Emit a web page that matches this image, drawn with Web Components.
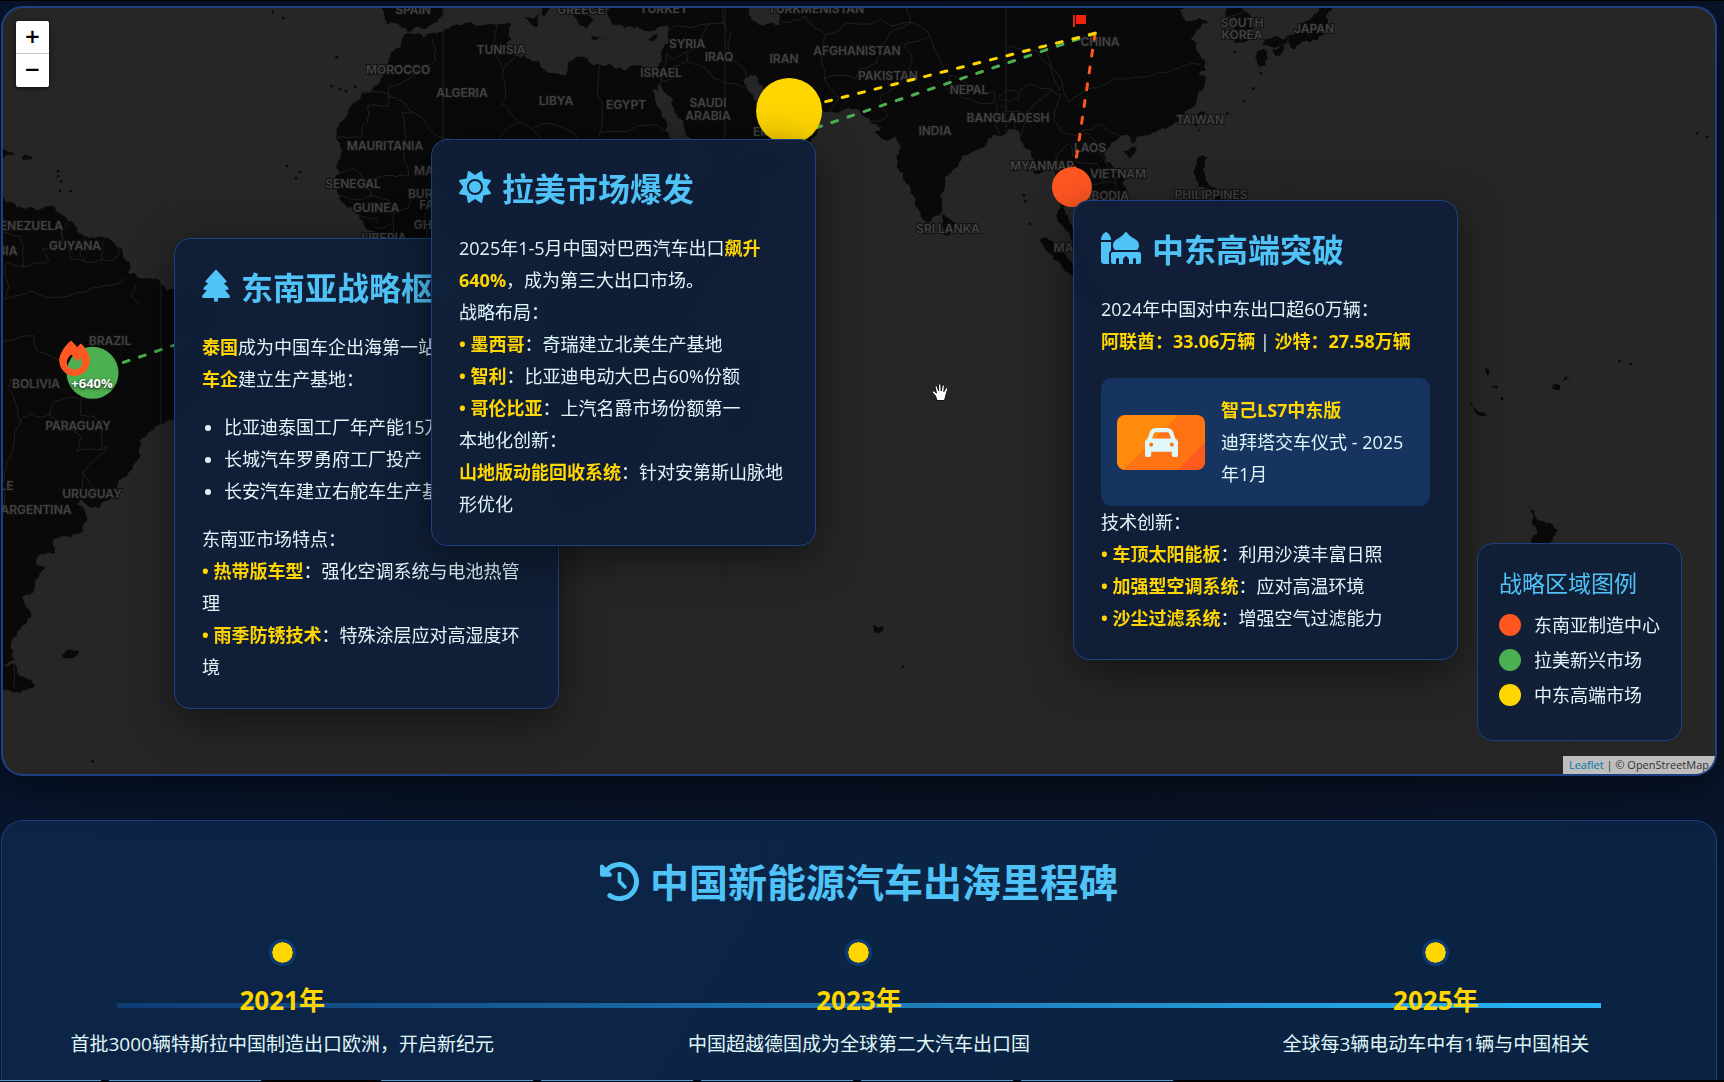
<!DOCTYPE html>
<html lang="zh-CN">
<head>
<meta charset="UTF-8">
<meta name="viewport" content="width=device-width, initial-scale=1.0">
<title>中国新能源汽车出海</title>
<style>
    :root {
        --accent: #4fc3f7;
        --gold: #ffd600;
        --orange: #ff5722;
        --green: #4caf50;
        --line: #1e4080;
        --text: #e0f7fa;
    }
    * {
        box-sizing: border-box;
    }
    body {
        margin: 0;
        min-height: 100vh;
        display: flex;
        flex-direction: column;
        border-top: 1px solid #000;
        background: linear-gradient(100deg, #07152e 0%, #081326 30%, #0a1224 70%, #08152b 100%);
        color: var(--text);
        font-family: "Open Sans", "Noto Sans CJK SC", sans-serif;
        font-size: 18px;
        line-height: 32px;
    }
    main {
        flex: 1;
        display: flex;
        flex-direction: column;
        gap: 44px;
        padding: 5px 7px 0 1px;
    }
    milestone-panel {
        flex: 1;
    }
    p {
        margin: 0;
    }
    ul {
        margin: 16px 0;
        padding-left: 22px;
    }
    strong {
        color: var(--gold);
    }
    .southeast { left: 171px; top: 230px; }
    .latin { left: 428px; top: 131px; }
    .mideast { left: 1070px; top: 192px; }
</style>
</head>
<body>
<main>
    <export-map>
        <region-card class="southeast" icon="tree" heading="东南亚战略枢纽">
            <p><strong>泰国</strong>成为中国车企出海第一站，<strong>多家中国车企</strong>建立生产基地：</p>
            <ul>
                <li>比亚迪泰国工厂年产能15万辆</li>
                <li>长城汽车罗勇府工厂投产</li>
                <li>长安汽车建立右舵车生产基地</li>
            </ul>
            <p>东南亚市场特点：</p>
            <p><strong>• 热带版车型</strong>：强化空调系统与电池热管理</p>
            <p><strong>• 雨季防锈技术</strong>：特殊涂层应对高湿度环境</p>
        </region-card>
        <region-card class="mideast" icon="mosque" heading="中东高端突破">
            <p>2024年中国对中东出口超60万辆：</p>
            <p><strong>阿联酋：33.06万辆</strong> | <strong>沙特：27.58万辆</strong></p>
            <car-spotlight>
                <strong slot="name">智己LS7中东版</strong>
                迪拜塔交车仪式 - 2025年1月
            </car-spotlight>
            <p>技术创新：</p>
            <p><strong>• 车顶太阳能板</strong>：利用沙漠丰富日照</p>
            <p><strong>• 加强型空调系统</strong>：应对高温环境</p>
            <p><strong>• 沙尘过滤系统</strong>：增强空气过滤能力</p>
        </region-card>
        <region-card class="latin" icon="sun" heading="拉美市场爆发">
            <p>2025年1-5月中国对巴西汽车出口<strong>飙升640%</strong>，成为第三大出口市场。</p>
            <p>战略布局：</p>
            <p><strong>• 墨西哥</strong>：奇瑞建立北美生产基地</p>
            <p><strong>• 智利</strong>：比亚迪电动大巴占60%份额</p>
            <p><strong>• 哥伦比亚</strong>：上汽名爵市场份额第一</p>
            <p>本地化创新：</p>
            <p><strong>山地版动能回收系统</strong>：针对安第斯山脉地形优化</p>
        </region-card>
        <map-legend slot="legend" heading="战略区域图例">
            <legend-item style="--dot: var(--orange)">东南亚制造中心</legend-item>
            <legend-item style="--dot: var(--green)">拉美新兴市场</legend-item>
            <legend-item style="--dot: var(--gold)">中东高端市场</legend-item>
        </map-legend>
    </export-map>
    <milestone-panel heading="中国新能源汽车出海里程碑">
        <milestone-item year="2021年">首批3000辆特斯拉中国制造出口欧洲，开启新纪元</milestone-item>
        <milestone-item year="2023年">中国超越德国成为全球第二大汽车出口国</milestone-item>
        <milestone-item year="2025年">全球每3辆电动车中有1辆与中国相关</milestone-item>
    </milestone-panel>
</main>
<window-strip></window-strip>

<script>
const icons = {
    tree: [448, 'M210.6 5.9L62 169.4c-3.9 4.2-6 9.8-6 15.5C56 197.7 66.3 208 79.1 208H104L30.6 281.4c-4.2 4.2-6.6 10-6.6 16C24 309.9 34.1 320 46.6 320H80L5.4 409.5C1.9 413.7 0 419 0 424.5c0 13 10.5 23.5 23.5 23.5H192v32c0 17.7 14.3 32 32 32s32-14.3 32-32V448H424.5c13 0 23.5-10.5 23.5-23.5c0-5.5-1.9-10.8-5.4-15L368 320h33.4c12.5 0 22.6-10.1 22.6-22.6c0-6-2.4-11.8-6.6-16L344 208h24.9c12.7 0 23.1-10.3 23.1-23.1c0-5.7-2.1-11.3-6-15.5L237.4 5.9C234 2.1 229.1 0 224 0s-10 2.1-13.4 5.9z'],
    sun: [512, 'M361.5 1.2c5 2.1 8.6 6.6 9.6 11.9L391 121l107.9 19.8c5.3 1 9.8 4.6 11.9 9.6s1.5 10.7-1.6 15.2L446.9 256l62.3 90.3c3.1 4.5 3.7 10.2 1.6 15.2s-6.6 8.6-11.9 9.6L391 391 371.1 498.9c-1 5.3-4.6 9.8-9.6 11.9s-10.7 1.5-15.2-1.6L256 446.9l-90.3 62.3c-4.5 3.1-10.2 3.7-15.2 1.6s-8.6-6.6-9.6-11.9L121 391 13.1 371.1c-5.3-1-9.8-4.6-11.9-9.6s-1.5-10.7 1.6-15.2L65.1 256 2.8 165.7c-3.1-4.5-3.7-10.2-1.6-15.2s6.6-8.6 11.9-9.6L121 121 140.9 13.1c1-5.3 4.6-9.8 9.6-11.9s10.7-1.5 15.2 1.6L256 65.1 346.3 2.8c4.5-3.1 10.2-3.7 15.2-1.6zM160 256a96 96 0 1 1 192 0 96 96 0 1 1 -192 0zm224 0a128 128 0 1 0 -256 0 128 128 0 1 0 256 0z'],
    mosque: [640, 'M400 0c5 0 9.8 2.4 12.8 6.4c34.7 46.3 78.1 74.9 133.5 111.5c5.2 3.4 10.5 7 16 10.6c28.9 19.2 45.7 51.7 45.7 86.1c0 28.6-11.3 54.5-29.8 73.4H221.8c-18.4-19-29.8-44.9-29.8-73.4c0-34.4 16.7-66.9 45.7-86.1c5.4-3.6 10.8-7.1 16-10.6C309.1 81.3 352.5 52.7 387.2 6.4c3-4 7.8-6.4 12.8-6.4zM288 512V440c0-13.3-10.7-24-24-24s-24 10.7-24 24v72H192c-17.7 0-32-14.3-32-32V352c0-17.7 14.3-32 32-32H608c17.7 0 32 14.3 32 32V480c0 17.7-14.3 32-32 32H560V440c0-13.3-10.7-24-24-24s-24 10.7-24 24v72H448V454c0-19-8.4-37-23-49.2L400 384l-25 20.8C360.4 417 352 435 352 454v58H288zM70.4 5.2c5.7-4.3 13.5-4.3 19.2 0l16 12C139.8 42.9 160 83.2 160 126v2H0v-2C0 83.2 20.2 42.9 54.4 17.2l16-12zM0 160H160V296.6c-19.1 11.1-32 31.7-32 55.4V480c0 9.6 2.1 18.6 5.8 26.8c-6.6 3.4-14 5.2-21.8 5.2H48c-26.5 0-48-21.5-48-48V176 160z'],
    car: [512, 'M135.2 117.4L109.1 192H402.9l-26.1-74.6C372.3 104.6 360.2 96 346.6 96H165.4c-13.6 0-25.7 8.6-30.2 21.4zM39.6 196.8L74.8 96.3C88.3 57.8 124.6 32 165.4 32H346.6c40.8 0 77.1 25.8 90.6 64.3l35.2 100.5c23.2 9.6 39.6 32.5 39.6 59.2V400v48c0 17.7-14.3 32-32 32H448c-17.7 0-32-14.3-32-32V400H96v48c0 17.7-14.3 32-32 32H32c-17.7 0-32-14.3-32-32V400 256c0-26.7 16.4-49.6 39.6-59.2zM128 288a32 32 0 1 0 -64 0 32 32 0 1 0 64 0zm288 32a32 32 0 1 0 0-64 32 32 0 1 0 0 64z'],
    history: [512, 'M75 75L41 41C25.9 25.9 0 36.6 0 57.9V168c0 13.3 10.7 24 24 24H134.1c21.4 0 32.1-25.9 17-41l-30.8-30.8C155 85.5 203 64 256 64c106 0 192 86 192 192s-86 192-192 192c-40.8 0-78.6-12.7-109.7-34.4c-14.5-10.1-34.4-6.6-44.6 7.9s-6.6 34.4 7.9 44.6C151.2 495 201.7 512 256 512c141.4 0 256-114.6 256-256S397.4 0 256 0C185.3 0 121.3 28.7 75 75zm181 53c-13.3 0-24 10.7-24 24V256c0 6.4 2.5 12.5 7 17l72 72c9.4 9.4 24.6 9.4 33.9 0s9.4-24.6 0-33.9l-65-65V152c0-13.3-10.7-24-24-24z'],
    fire: [448, 'M159.3 5.4c7.8-7.3 19.9-7.2 27.7 .1c27.6 25.9 53.5 53.8 77.7 84c11-14.4 23.5-30.1 37-42.9c7.9-7.4 20.1-7.4 28 .1c34.6 33 63.9 76.6 84.5 118c20.3 40.8 33.8 82.5 33.8 111.9C448 404.2 348.2 512 224 512C98.4 512 0 404.1 0 276.5c0-38.4 17.8-85.3 45.4-131.7C73.3 97.7 112.7 48.6 159.3 5.4zM225.7 416c25.3 0 47.7-7 68.8-21c42.1-29.4 53.4-88.2 28.1-134.4c-4.5-9-16-9.6-22.5-2l-25.2 29.3c-6.6 7.6-18.5 7.4-24.7-.5c-16.5-21-46-58.5-62.8-79.8c-6.3-8-18.3-8.1-24.7-.1c-33.8 42.5-50.8 69.3-50.8 99.4C112 375.4 162.6 416 225.7 416z'],
};

// outlines as "lon,lat lon,lat ..."
const land = [
    // south america
    '-76,11 -72,12 -71.5,12.4 -70,12.1 -70,11.5 -68.4,11.2 -68,10.6 -66,10.6 -64.7,10.1 -62,10.7 -61.8,9.8 -60.8,9.3 -60,8.5 -58.5,7.3 -57.1,6 -55,5.9 -54,5.8 -52.6,5 -51.6,4.2 -51,2.5 -50,1.7 -50.4,.2 -49,-.3 -48,-.7 -47,-.7 -45,-1.5 -44.3,-2.6 -43,-2.4 -41.5,-2.9 -40,-2.8 -38.5,-3.7 -37,-4.8 -35.4,-5.2 -34.9,-7 -35.2,-9 -36.5,-10.5 -37.5,-12 -38.5,-13 -39,-14.5 -39,-17 -39.7,-19.5 -40.9,-22 -42,-22.9 -44.5,-23.1 -46.5,-24.2 -48.5,-25.8 -48.7,-28.3 -50.2,-30.2 -52,-32.5 -53.5,-34 -54.9,-34.9 -56.5,-34.9 -58,-34 -58.4,-34.5 -57.2,-35.5 -56.8,-36.4 -57.6,-38 -59.5,-38.7 -62.2,-38.9 -62,-40.7 -64.8,-41 -65,-42 -63.6,-42.4 -64.5,-43 -65.3,-44.8 -67.3,-45.8 -66.5,-47 -65.8,-47.9 -67.5,-49.2 -69,-50.6 -68.4,-52.3 -70.5,-52.8 -71,-54 -76,-54 -80,-40 -80,-10',
    '-68.5,-52.7 -67.8,-53.8 -65.2,-54.7 -67,-55.2 -70,-55.2 -72,-54',
    '-61,-51.8 -59.6,-51.3 -58,-51.5 -59,-52.1 -60.6,-52.2',
    // africa, europe's edge and asia in one ring
    '-6,35.8 -5.3,35.9 -2.9,35.3 -1,35.8 1,36.5 3,36.9 6,36.9 8.5,37 10.2,37.2 11,37 10.5,36 10.9,35 10.1,34.2 11.2,33.2 13,32.9 15.2,32.3 15.6,31.4 18,30.5 19.7,30.4 20,31.5 20.1,32.2 21.6,32.9 23,32.6 23.2,32.2 25,31.7 27.5,31.2 29,30.9 30.5,31.5 32.3,31.2 34.2,31.3 34.5,31.6 35,32.8 35.9,34.5 35.8,36 36.1,36.8 34.5,36.7 33,36.1 31,36.8 30.5,36.5 29,36.5 27.3,37 26.3,38.3 26.7,39.3 26,40.5 26,50 50,52 75,52 100,52 120,52 138,50 134,43 130.7,42.3 129,41 127.5,39.5 128.3,38.6 129,37.7 129.5,36.5 129,35.1 127.5,34.7 126.4,34.6 126.4,36.5 126.7,37.5 125,38 125.2,39.3 124.3,39.9 123,39.7 121.2,38.8 121.5,40.5 120,40 118.5,39.1 117.7,38.9 118.2,38 119,37.3 120.8,37.8 122.5,37.3 121,36.6 119.5,35.3 120.3,34 121.8,32.1 121.8,31 120.8,30.4 122,29.9 121.6,28.5 120.5,27.2 119.5,25.5 118.2,24.4 116.7,23.3 114.3,22.4 113.3,22 111,21.5 110.3,20.4 109.8,21.5 108.3,21.6 106.8,20.5 105.7,18.9 107,17 108.8,15.4 109.3,13.2 109,11.5 107,10.4 106.5,9.5 105,8.6 104.8,10.2 103.5,10.6 102.5,12 101,12.7 100.9,13.5 100,13.4 99.9,12 99.2,10.3 99.9,9.2 100.6,7.2 102,6.3 103.3,4.8 103.4,3 104.2,1.4 103.4,1.3 101.3,2.9 100.4,5.5 100.1,6.5 98.3,8.2 98.7,10.5 98.7,12 97.8,14.8 97.6,16.5 96,16.4 95.3,15.8 94.3,16 94.5,17.5 93.8,19.5 92.3,20.8 91.8,22.4 90.5,22.6 90,21.8 88,21.7 87,21 86.8,20.2 85,19.3 82.3,16.9 81,15.8 80.2,15.3 80.1,13.5 79.8,11.5 79.8,10.3 79,9.3 78.1,8.7 77.5,8.1 76.5,9 75.5,11.8 74.5,14 73.5,16 72.8,18.8 72.8,20.5 72.4,21.3 71,20.8 69,22.1 70,22.8 68.6,23.3 67,24.5 66.5,25.3 62,25.1 59,25.4 57.3,25.8 56.9,27 54.8,26.6 52.5,27.5 51,28.8 50,30.2 48.5,30 48,29.5 48.7,28.2 50.2,26.6 50.8,25 51.2,26 51.6,25 51.5,24.3 54,24.1 56.1,26.1 56.4,24.8 58.6,23.6 59.8,22.5 58.5,20.4 57.7,19 55.3,17.4 52.2,15.7 49,14.2 45,12.8 43.5,12.7 42.8,15 42.6,16.5 40.8,19.5 39,21.5 38.5,23.5 37,25 35.2,28 34.9,29.4 34.4,28 33.3,28.3 32.6,29.8 33.5,28 34,26.5 35.5,24 35.6,22.5 37.2,21 37.4,19 38.6,18 39.6,15.5 41.2,14.6 43.1,12.5 43.2,11.6 44.5,10.5 47,11.2 51.2,11.9 50.8,9.5 49,6.5 47.5,4.2 44,1.2 42.5,-.5 41,-2 39.5,-4.5 38.8,-6.5 39.5,-8 40.5,-10.5 40.6,-15 38,-17.2 34.8,-20 35.5,-24 32.8,-26 32.5,-28.5 30,-31.5 27,-33.7 22,-34.1 20,-34.8 18.4,-34 18,-32 16.5,-28.6 15,-26 14.5,-22.5 12,-18.2 11.8,-16 13.5,-12.5 13,-9 12.2,-6 9.5,-2.5 8.8,-.7 9.5,1 9.7,3.5 8.5,4.7 6.5,4.3 5,5.7 2.5,6.3 -2,4.8 -4.5,5.2 -7.5,4.4 -9.5,5.6 -11.5,6.9 -13.2,8.7 -14.5,10.5 -16.5,12.2 -16.8,13.5 -17.5,14.7 -16.5,16 -16.3,19 -17,21 -16,23.8 -14.8,25.8 -13,27.7 -11,28.8 -9.7,30 -9.8,31.4 -8.5,33.3 -6.8,34.1',
    // mediterranean
    '-9,41 -9.5,38.7 -8.8,37 -7.4,37.2 -6.3,36.6 -5.6,36 -4.4,36.7 -2.2,36.8 -.7,37.7 .1,38.7 -.3,39.5 0,41',
    '12.5,38 15.6,38.2 15.1,36.7',
    '8.5,39 9.6,39.2 9.7,41 8.3,41',
    '15.8,38 16.6,38.4 17,39 18,40 16,41 15.8,40',
    '20,40 21.3,37.7 22,36.8 23,36.5 24,37.7 23,38.5 24,38.2 23,40',
    '23.6,35.5 26.2,35.2 24,35',
    '32.4,35 34.5,35.6 33.8,34.9',
    // indian ocean and south-east asia
    '80,9.7 81.8,7.5 81,6.2 80,6.2 79.8,8',
    '95.3,5.6 97.5,5.2 100.5,2 103.5,-.5 106,-3 105.8,-5.8 104,-5.5 101,-2.5 98.7,1.5',
    '121,25.1 121.9,25 121,22 120.1,23',
    '108.7,19.3 110.5,20.1 111,19.5 109.5,18.3',
    '120.6,18.5 122.2,18.4 121.7,16 123.8,13.3 120.7,13.8 120,16',
    '123,12 124.5,12.5 125.3,11 123,9.5',
    '49.3,-12.2 50.3,-15.8 47.2,-25 44,-24.5 44.3,-17',
    // japan
    '130,33.5 131.7,33.6 131.5,31.5 130.3,31.3 129.8,32.7',
    '131,34.2 133,35.5 136,35.7 137.3,37.2 139,38 140,40 141.5,41 142,39.5 141,38 140.8,35.8 139.8,35 138.5,34.7 137,34.6 136,33.7 135,34.6 132.5,34.1',
    '132.5,33.8 134.5,34.3 134,33.3 133,32.8',
    // new zealand
    '172.7,-34.5 174.5,-36 175.5,-36.7 178.4,-37.7 177,-39.3 175.3,-41.6 173.8,-39.3 174.8,-38',
    '172.7,-40.6 174.2,-41.6 171,-44 170.5,-46 168.5,-46.6 166.5,-45.8 171,-42',
    // caribbean and small islands
    '-76,18.4 -71,19.8 -68.4,18.6 -71,18',
    '-67.2,18.5 -65.7,18.4 -65.8,18 -67.2,18',
    '68.8,-48.8 70.4,-49 69.8,-49.7 68.9,-49.6',
    '177.3,-17.6 178.6,-17.6 178.4,-18.2 177.4,-18.1',
    '178.8,-16.8 180,-16.2 179.2,-16.8',
    '164,-20.2 166.8,-22.2 166,-22.1',
    '166.6,-14.7 167.2,-15.8 166.9,-16',
];

const lakes = [
    '47,45 49.5,41 49,39 49.2,37.6 51,36.8 53.8,36.9 54,39 53,41 54,45',
];

const specks = [
    [-61.5, 16.2], [-61, 14.6], [-61.2, 13.2], [-61.5, 15.4], [-59.5, 13.1], [-17.8, 28.7], [-16.5, 28.3], [-15.5, 28],
    [-14, 28.6], [-17, 32.7], [-25.5, 37.8], [-27.2, 38.6], [-24.9, 17], [-23.5, 15.1], [-22.9, 16.1], [92.8, 12.5],
    [93, 11.5], [93.8, 8], [128, 26.6], [129.5, 28.4], [125.3, 24.8], [130.7, 30.5], [126.5, 33.4], [73.5, -53],
    [167.8, -17.7], [168.3, -17.8], [169.2, -19.5], [200.4, 21.9], [202, 21.4], [203.8, 20.8],
    [188, -13.8], [189.8, -14.2], [-56, -61.2],
];

const borders = [
    '-1.7,35.1 -1.2,32.3 -3,31.5 -5,30 -8.7,28.7 -8.7,27.3', '-8.7,27.7 -13,27.7', '-8.7,27.3 -8.7,26 -12,26 -12,23.5 -13,23 -13,21.3 -17,21.3',
    '-8.7,27.3 -4.8,25 1.2,21.1 1.8,20.3 3.2,19.7 3.3,19 5.8,19.5 12,23.5', '-4.8,25 -6.5,25 -5.5,15.5 -9.5,15.5 -12,14.8',
    '-16.4,16 -14.5,16.6 -12.2,14.8 -11.4,12.4 -16.7,12.4', '-11.4,12.4 -8,11 -8,8 -11,7.5', '-8,8 -7.5,4.5', '-13.5,9.5 -10.5,9 -10.5,8',
    '-8,10.5 -5.5,10.4 -5.2,12 -3,13.5 0,15 1,13.5 2.2,12.4', '-2.8,9.7 -2.9,5', '0,11 .5,6',
    '12,23.5 9.4,26.2 9.9,28.5 9.5,30.2 9,32 7.5,33.8 8.3,35 8.6,36.9', '9.5,30.2 10.2,31.7 11.5,33.1',
    '12,23.5 14.2,22.6 16,23.4 24,19.5 24,20 25,20 25,22', '14.2,22.6 15.8,20 15.5,16.9', '3.3,19 3.8,15.7 1,14.9',
    '25,31.6 24.8,29.3 25,22 37,22', '34.3,31.3 34.9,29.5 35.5,31.8 35.6,33.2 36.8,32.3 38.8,33.4 41,34.4 42.4,37.1',
    '36,36 36.8,36.7 42.4,37.1 44.8,37.2 46,35.8 45.5,34 47.7,31.5 48.5,30', '44.8,37.2 44,39.5',
    '34.9,29.4 37.5,30 37,31.5 39.1,32.1 42,31.1 44.7,29.2 46.5,29.1 48.4,28.5', '39.1,32.1 38.8,33.4',
    '42.8,16.4 44,17.4 47,17 52,19 55,20 55.7,22 55.2,22.7 52.5,23 51.5,24.3', '52,19 53,16.6',
    '61.6,25.2 63.2,27 61,29.8 60.6,33 61.2,35.6 58,38 54,37.3', '61,29.8 66,29.8 66.5,31.2 69.3,31.9 70,33.7 71.5,36 74.8,37.2',
    '61.2,35.6 64.5,37.2 68,37.1 70,37.6 71.5,36.8 74.8,37.2', '68.2,23.7 71,24.3 70,27.5 72.8,29 74.5,31 75,32.5 73.8,34.5 77.8,35.5 74.8,37.2 74,40',
    '77.8,35.5 79.3,32.5 81,30.2', '80.1,28.8 81,30.2 84,28.9 86,28 88.1,27.9 88.1,26.4 84.5,26.8 80.1,28.8',
    '88.9,27.3 90,28.2 92,27.7 92,26.8 89,26.8 88.9,27.3', '89,21.8 88.2,24.5 88.5,26.3 89.8,25.9 89.8,25.2 92.3,25.1 91.2,23.5 92.2,21.5',
    '92.2,21.5 93.2,24 95,26.6 97.3,28.2', '92,27.7 94,29 97.3,28.2 98.7,27.5 97.6,24 99,22 101.2,21.6', '100,20.4 97.8,18.5 98.5,16.5 98.2,15 99.5,12',
    '101.2,21.6 102.2,22.4 104,20.9 105,18.8 107.5,15.3 107.5,14.3', '100.2,20.3 101.2,17.6 104.5,17.5 105.5,14.4',
    '102.6,12 102.5,13.6 105.5,14.4 107.5,14.3 107.5,12.4 104.6,10.5', '102.2,22.4 105.3,23.3 106.8,22 108,21.6',
    '90,34 95,33.5 99,29 100,26.5 104,28.5 107,29.7 112,30 114,30.5 118,31.5 121,31.8', '96,34 97,32 98.5,28', '125.5,38 128.3,38.6',
    '-61,6.7 -60,5 -59.5,2.5 -57,1.9 -54.5,2.3 -52.5,2.3 -51.6,4.1', '-60,8.3 -61,6.7 -60.7,5 -64,4 -63,2 -67,1.2 -69.8,1.7 -70,-4.2',
    '-67,1.2 -67.5,6 -72,7', '-57.3,6 -58,3.5 -57,1.9', '-54,5.8 -54.5,4 -54.5,2.3', '-71,-4 -66,-2.7 -62,-3.7 -58,-3 -55,-2.2 -52,-1.5 -50.5,-.5', '-49,-1.7 -49.8,-3 -48.5,-5',
    '-71,-11 -65.4,-9.8 -65,-12 -60.5,-13.8 -60,-16.3 -58,-17 -57.8,-19.8', '-69,-16.5 -69.5,-18 -68.3,-20 -67.5,-22.9 -66,-21.8 -62.8,-22 -62,-20 -59,-19.3 -57.8,-20 -57.9,-22 -55.6,-22.3 -54.4,-24 -54.7,-27 -58.6,-27.3 -57.8,-25.2 -62.8,-22',
    '-54.7,-27 -53.7,-26.5 -55,-28 -57.6,-30.2 -58.2,-33.5', '-57.6,-30.2 -53.4,-33.7', '-67.5,-22.9 -68.5,-25 -70,-30 -70,-34 -71,-38', '-68.6,-52.6 -68.6,-54.9',
];

// country names with their centre on the map pane
const places = [
    ['SPAIN', 410, 1], ['GREECE', 578, 1], ['TURKEY', 661, 0], ['TURKMENISTAN', 813, 0], ['TUNISIA', 498, 41], ['MOROCCO', 395, 61],
    ['ALGERIA', 459, 84], ['LIBYA', 553, 92], ['EGYPT', 623, 96], ['MAURITANIA', 382, 137], ['SENEGAL', 350, 175], ['GUINEA', 373, 199],
    ['LIBERIA', 381, 229], ['MALI', 426, 162], ['BURKINA', 432, 185], ['FASO', 432, 196], ['GHANA', 433, 216], ['ISRAEL', 658, 64],
    ['SYRIA', 684, 35], ['IRAQ', 716, 48], ['IRAN', 781, 50], ['AFGHANISTAN', 854, 42], ['PAKISTAN', 885, 67], ['SAUDI', 705, 94],
    ['ARABIA', 705, 107], ['EMIRATES', 780, 123], ['NEPAL', 966, 81], ['INDIA', 932, 122], ['BANGLADESH', 1005, 109], ['SRI LANKA', 945, 220],
    ['CHINA', 1097, 33], ['LAOS', 1087, 139], ['MYANMAR', 1039, 157], ['VIETNAM', 1115, 165], ['CAMBODIA', 1093, 187], ['PHILIPPINES', 1208, 186],
    ['TAIWAN', 1197, 111], ['SOUTH', 1239, 14], ['KOREA', 1239, 26], ['JAPAN', 1311, 20], ['MALAYSIA', 1082, 239], ['VENEZUELA', 24, 217],
    ['GUYANA', 72, 237], ['COLOMBIA', -18, 242], ['BRAZIL', 107, 332], ['BOLIVIA', 33, 375], ['PARAGUAY', 75, 417], ['URUGUAY', 89, 485],
    ['CHILE', -7, 477], ['ARGENTINA', 33, 501], ['NEW', 1521, 546], ['ZEALAND', 1521, 558],
];

const cities = {
    china: [104.2, 35.86],
    bangkok: [100.5, 13.75],
    dubai: [55.3, 25.2],
    brazil: [-56, -15.6],
};

const WORLD = 2253;
const parse = text => text.split(' ').map(pair => pair.split(',').map(Number));

// web mercator, 0/0 sits at 440/266 on the pane
const project = ([lon, lat]) => [
    440 + lon * WORLD / 360,
    266 - WORLD / (2 * Math.PI) * Math.log(Math.tan(Math.PI / 4 + lat * Math.PI / 360)),
];

let seed = 7;
const random = () => {
    seed = (seed * 16807) % 2147483647;
    return seed / 2147483647 - 0.5;
};

// split each edge and push the middle sideways, so coasts are not straight
const roughen = (points, amount, closed) => {
    const out = [];
    const count = closed ? points.length : points.length - 1;
    for (let i = 0; i < count; i++) {
        const [x1, y1] = points[i];
        const [x2, y2] = points[(i + 1) % points.length];
        const shift = random() * amount;
        out.push([x1, y1], [(x1 + x2) / 2 + (y2 - y1) * shift, (y1 + y2) / 2 - (x2 - x1) * shift]);
    }
    if (!closed) out.push(points[points.length - 1]);
    return out;
};

const toPath = (text, closed) => {
    let points = parse(text).map(project);
    for (let i = 0; i < 3; i++) points = roughen(points, closed ? 0.45 : 0.25, closed);
    return 'M' + points.map(p => p.map(n => n.toFixed(1)).join(' ')).join('L') + (closed ? 'Z' : '');
};

const icon = name => {
    const [width, path] = icons[name];
    return `<svg class="icon" viewBox="0 0 ${width} 512" aria-hidden="true"><path d="${path}"/></svg>`;
};

const drawMap = () => {
    const at = Object.fromEntries(Object.entries(cities).map(([name, pos]) => [name, project(pos)]));
    const route = (to, colour) => `<path d="M${at.china.join(' ')}L${at[to].join(' ')}" stroke="${colour}"/>`;
    const meridians = [-45, 0, 45, 90, 135, 180].map(lon => `<path d="M${Math.round(project([lon, 0])[0])} 0V770"/>`).join('');
    return `
        <svg class="pane" aria-label="map">
            <g fill="#090909">${land.map(text => `<path d="${toPath(text, true)}"/>`).join('')}</g>
            <g fill="#090909">${specks.map(pos => project(pos)).map(([x, y]) => `<circle cx="${x}" cy="${y}" r="1.4"/>`).join('')}</g>
            <g fill="#262626">${lakes.map(text => `<path d="${toPath(text, true)}"/>`).join('')}</g>
            <g fill="none" stroke="#212121">${borders.map(text => `<path d="${toPath(text, false)}"/>`).join('')}</g>
            <g stroke="#1c2330">${meridians}</g>
            <g class="places">${places.map(([name, x, y]) => `<text x="${x}" y="${y + 5}">${name}</text>`).join('')}</g>
            <g fill="none" stroke-width="3" stroke-linecap="round" stroke-dasharray="6 11">
                ${route('bangkok', '#ff5722')}${route('brazil', '#4caf50')}${route('dubai', '#ffd600')}
            </g>
            <circle cx="${at.bangkok[0]}" cy="${at.bangkok[1]}" r="20" fill="#ff5722"/>
            <circle cx="${at.brazil[0]}" cy="${at.brazil[1]}" r="26" fill="#4caf50"/>
            <circle cx="${at.dubai[0]}" cy="${at.dubai[1]}" r="33" fill="#ffd600"/>
            <path d="M1070 7h2v12h-2zM1073 7h10v9h-10z" fill="#ee2211"/>
            <svg x="56" y="333" width="31" height="35" viewBox="0 0 448 512"><path d="${icons.fire[1]}" fill="#ff5722"/></svg>
            <text class="growth" x="89" y="380">+640%</text>
            <path transform="translate(929 375)" fill="#fff" stroke="#111" d="M5 17.500L3.500 13 0.500 9.500C0 8 1.800 7.500 3 8.700L4.500 10 3 4C3 2.500 4.800 2.300 5.300 3.700L6.600 8 6.500 2C6.700 0.600 8.600 0.600 8.900 2L9.200 8 10.300 2.700C10.800 1.400 12.500 1.700 12.400 3.200L11.800 8.700 13.700 5.200C14.500 4.200 16 5 15.600 6.300L14 12 12.500 17.500Z"/>
        </svg>`;
};

class ExportMap extends HTMLElement {
    constructor() {
        super();
        this.attachShadow({mode: 'open'});
        this.shadowRoot.innerHTML = `
            <style>
                :host {
                    display: block;
                    position: relative;
                    height: 770px;
                    overflow: hidden;
                    border: 2px solid var(--line);
                    border-radius: 22px;
                    background: #262626;
                    box-shadow: 0 10px 40px rgba(0, 0, 0, 0.5);
                }
                .pane {
                    position: absolute;
                    inset: 0;
                    width: 100%;
                    height: 100%;
                }
                .places {
                    font: 600 12px Inter, sans-serif;
                    text-anchor: middle;
                    fill: #424242;
                    stroke: #101010;
                    stroke-width: 2px;
                    paint-order: stroke;
                }
                .growth {
                    font: 700 13px "Open Sans", sans-serif;
                    text-anchor: middle;
                    fill: #fff;
                    text-shadow: 0 1px 3px #000;
                }
                .zoom {
                    position: absolute;
                    left: 13px;
                    top: 13px;
                    display: flex;
                    flex-direction: column;
                    border-radius: 2px;
                    overflow: hidden;
                    box-shadow: 0 1px 5px rgba(0, 0, 0, 0.65);
                }
                .zoom button {
                    width: 33px;
                    height: 33px;
                    padding: 0 0 2px;
                    border: 0;
                    background: #fff;
                    color: #000;
                    font: 600 26px/31px "Open Sans", sans-serif;
                    cursor: pointer;
                }
                .zoom button:first-child {
                    border-bottom: 1px solid #b8c8d0;
                }
                .legend {
                    position: absolute;
                    right: 33px;
                    bottom: 33px;
                }
                .credit {
                    position: absolute;
                    right: 0;
                    bottom: 0;
                    padding: 0 6px;
                    background: rgba(255, 255, 255, 0.7);
                    color: #333;
                    font-size: 11px;
                    line-height: 18px;
                }
                .credit a {
                    color: #0078a8;
                    text-decoration: none;
                }
            </style>
            ${drawMap()}
            <slot></slot>
            <div class="zoom">
                <button type="button" aria-label="放大">+</button>
                <button type="button" aria-label="缩小">−</button>
            </div>
            <div class="legend"><slot name="legend"></slot></div>
            <div class="credit"><a href="#">Leaflet</a> | © OpenStreetMap</div>
        `;
    }
}

class RegionCard extends HTMLElement {
    constructor() {
        super();
        this.attachShadow({mode: 'open'});
        this.shadowRoot.innerHTML = `
            <style>
                :host {
                    position: absolute;
                    display: block;
                    box-sizing: border-box;
                    width: 385px;
                    padding: 27px 27px 25px;
                    border: 1px solid var(--line);
                    border-radius: 16px;
                    background: rgba(15, 31, 56, 0.97);
                    backdrop-filter: blur(11px);
                    box-shadow: 0 11px 44px rgba(0, 0, 0, 0.5);
                }
                h2 {
                    display: flex;
                    align-items: center;
                    gap: 11px;
                    margin: 0 0 21px;
                    color: var(--accent);
                    font-size: 32px;
                    line-height: 44px;
                    white-space: nowrap;
                }
                .icon {
                    height: 32px;
                    fill: currentColor;
                    margin-bottom: 4px;
                }
            </style>
            <h2>${icon(this.getAttribute('icon'))}${this.getAttribute('heading')}</h2>
            <slot></slot>
        `;
    }
}

class CarSpotlight extends HTMLElement {
    constructor() {
        super();
        this.attachShadow({mode: 'open'});
        this.shadowRoot.innerHTML = `
            <style>
                :host {
                    display: flex;
                    align-items: center;
                    gap: 16px;
                    margin-top: 21px;
                    padding: 16px;
                    border-radius: 11px;
                    background: #17335f;
                }
                .photo {
                    flex: none;
                    display: grid;
                    place-items: center;
                    width: 88px;
                    height: 55px;
                    border-radius: 8px;
                    background: linear-gradient(135deg, #ff8a0c 43%, #ff7314 43%, #ff7314 81%, #ff5a1e 81%);
                }
                .icon {
                    height: 33px;
                    fill: var(--text);
                }
            </style>
            <div class="photo">${icon('car')}</div>
            <div>
                <div><slot name="name"></slot></div>
                <slot></slot>
            </div>
        `;
    }
}

class MapLegend extends HTMLElement {
    constructor() {
        super();
        this.attachShadow({mode: 'open'});
        this.shadowRoot.innerHTML = `
            <style>
                :host {
                    display: block;
                    padding: 22px 21px;
                    border: 1px solid var(--line);
                    border-radius: 16px;
                    background: rgba(16, 31, 56, 0.95);
                }
                h3 {
                    margin: 0 0 13px;
                    color: var(--accent);
                    font-size: 23px;
                    font-weight: 400;
                    line-height: 34px;
                }
            </style>
            <h3>${this.getAttribute('heading')}</h3>
            <slot></slot>
        `;
    }
}

class LegendItem extends HTMLElement {
    constructor() {
        super();
        this.attachShadow({mode: 'open'});
        this.shadowRoot.innerHTML = `
            <style>
                :host {
                    display: flex;
                    align-items: center;
                    gap: 13px;
                    margin-bottom: 11px;
                    line-height: 24px;
                }
                i {
                    width: 22px;
                    height: 22px;
                    border-radius: 50%;
                    background: var(--dot);
                }
            </style>
            <i></i><slot></slot>
        `;
    }
}

class MilestonePanel extends HTMLElement {
    constructor() {
        super();
        this.attachShadow({mode: 'open'});
        this.shadowRoot.innerHTML = `
            <style>
                :host {
                    display: block;
                    padding: 33px 33px 0;
                    border: 1px solid #1b3f7a;
                    border-bottom: 0;
                    border-radius: 22px 22px 0 0;
                    background: linear-gradient(120deg, #0c2547, #0b2342);
                }
                h2 {
                    display: flex;
                    align-items: center;
                    justify-content: center;
                    gap: 11px;
                    margin: 0 0 30px;
                    color: var(--accent);
                    font-size: 39px;
                    line-height: 55px;
                }
                .icon {
                    height: 39px;
                    fill: currentColor;
                }
                .track {
                    position: relative;
                    display: flex;
                    justify-content: space-between;
                }
                .track::before {
                    content: '';
                    position: absolute;
                    left: 5%;
                    right: 5%;
                    top: 64px;
                    height: 5px;
                    background: linear-gradient(90deg, #0f3b73, #29b6f6);
                }
            </style>
            <h2>${icon('history')}${this.getAttribute('heading')}</h2>
            <div class="track"><slot></slot></div>
        `;
    }
}

class MilestoneItem extends HTMLElement {
    constructor() {
        super();
        this.attachShadow({mode: 'open'});
        this.shadowRoot.innerHTML = `
            <style>
                :host {
                    position: relative;
                    display: flex;
                    flex-direction: column;
                    align-items: center;
                    width: 30%;
                    font-size: 19px;
                    line-height: 34px;
                    text-align: center;
                }
                .dot {
                    width: 21px;
                    height: 21px;
                    border: 3px solid #0f3b73;
                    border-radius: 50%;
                    background: var(--gold);
                    background-clip: padding-box;
                }
                h3 {
                    margin: 16px 0 9px;
                    color: var(--gold);
                    font-size: 26px;
                    line-height: 36px;
                }
            </style>
            <div class="dot"></div>
            <h3>${this.getAttribute('year')}</h3>
            <div><slot></slot></div>
        `;
    }
}

// tops of the buttons in the bar under the page
class WindowStrip extends HTMLElement {
    constructor() {
        super();
        this.attachShadow({mode: 'open'});
        this.shadowRoot.innerHTML = `
            <style>
                :host {
                    display: flex;
                    gap: 8px;
                    height: 2px;
                    background: #000;
                }
                i {
                    width: 152px;
                    height: 1px;
                    background: #4f9fe0;
                }
                i:first-of-type {
                    width: 101px;
                }
                i:nth-of-type(2) {
                    margin-right: 112px;
                }
            </style>
            <i></i><i></i><i></i><i></i><i></i><i></i><i></i>
        `;
    }
}

customElements.define('export-map', ExportMap);
customElements.define('region-card', RegionCard);
customElements.define('car-spotlight', CarSpotlight);
customElements.define('map-legend', MapLegend);
customElements.define('legend-item', LegendItem);
customElements.define('milestone-panel', MilestonePanel);
customElements.define('milestone-item', MilestoneItem);
customElements.define('window-strip', WindowStrip);
</script>
</body>
</html>
